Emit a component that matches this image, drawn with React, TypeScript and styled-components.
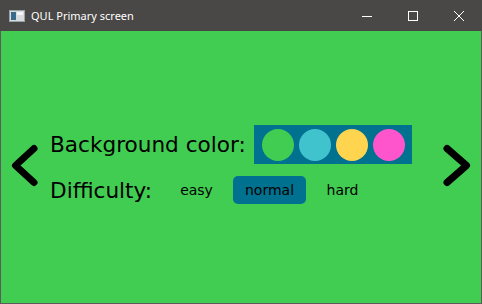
import { useState } from 'react'
import styled, { createGlobalStyle } from 'styled-components'

const GlobalStyle = createGlobalStyle`
  html, body {
    margin: 0;
    padding: 0;
    background: #3fcd52;
  }
`

const colors = ['#41cd52', '#41c3cd', '#ffd54f', '#ff55cc']
const levels = ['easy', 'normal', 'hard']

export default function App() {
  const [level, setLevel] = useState('normal')
  const [bg, setBg] = useState(colors[0])

  return (
    <Window>
      <GlobalStyle />
      <TitleBar>
        <AppIcon width="16" height="12" viewBox="0 0 16 12">
          <rect x="0.5" y="0.5" width="15" height="11" fill="#d8dcdf" stroke="#9aa3aa" />
          <rect x="2" y="2" width="5" height="8" fill="#3a6d8c" />
          <rect x="8" y="2" width="6" height="3" fill="#f3f5f6" />
        </AppIcon>
        <Title>QUL Primary screen</Title>
        <WinButtons>
          <WinButton>
            <svg width="10" height="10" viewBox="0 0 10 10">
              <line x1="0" y1="5.5" x2="10" y2="5.5" stroke="#fff" strokeWidth="1" />
            </svg>
          </WinButton>
          <WinButton>
            <svg width="10" height="10" viewBox="0 0 10 10">
              <rect x="0.5" y="0.5" width="9" height="9" fill="none" stroke="#fff" strokeWidth="1" />
            </svg>
          </WinButton>
          <WinButton>
            <svg width="10" height="10" viewBox="0 0 10 10">
              <path d="M0 0 L10 10 M10 0 L0 10" stroke="#fff" strokeWidth="1" />
            </svg>
          </WinButton>
        </WinButtons>
      </TitleBar>
      <Screen style={{ background: bg }}>
        <Arrow width="48" height="48" viewBox="0 0 48 48">
          <polyline points="33,5.5 14.5,22.5 33,39.5" fill="none" stroke="#000" strokeWidth="7" strokeLinecap="round" strokeLinejoin="round" />
        </Arrow>
        <Settings>
          <Row>
            <Label>Background color:</Label>
            <Palette>
              {colors.map((c) => (
                <Swatch key={c} $color={c} onClick={() => setBg(c)} />
              ))}
            </Palette>
          </Row>
          <Row>
            <Label>Difficulty:</Label>
            <Levels>
              {levels.map((l) => (
                <Level key={l} $active={l === level} onClick={() => setLevel(l)}>
                  {l}
                </Level>
              ))}
            </Levels>
          </Row>
        </Settings>
        <Arrow width="48" height="48" viewBox="0 0 48 48">
          <polyline points="14,5.5 33.5,22.5 14,39.5" fill="none" stroke="#000" strokeWidth="7" strokeLinecap="round" strokeLinejoin="round" />
        </Arrow>
      </Screen>
    </Window>
  )
}

const Window = styled.div`
  width: 482px;
  height: 304px;
  box-sizing: border-box;
  border: 1px solid #5c5c5c;
  border-top: none;
  display: flex;
  flex-direction: column;
  font-family: "DejaVu Sans", sans-serif;
`

const TitleBar = styled.div`
  height: 31px;
  margin: 0 -1px;
  background: #4a4846;
  display: flex;
  align-items: center;
  color: #fff;
  font-family: "Noto Sans", "Open Sans", sans-serif;
  font-size: 11px;
`

const AppIcon = styled.svg`
  margin-left: 9px;
  margin-right: 6px;
`

const Title = styled.span`
  flex: 1;
  padding-bottom: 1px;
`

const WinButtons = styled.div`
  display: flex;
  height: 100%;
`

const WinButton = styled.div`
  width: 46px;
  height: 100%;
  display: flex;
  align-items: center;
  justify-content: center;
`

const Screen = styled.div`
  flex: 1;
  display: flex;
  align-items: center;
`

const Arrow = styled.svg`
  flex: none;
  display: block;
`

const Settings = styled.div`
  flex: 1;
  display: flex;
  flex-direction: column;
  gap: 12px;
  padding-left: 1px;
  padding-bottom: 5px;
`

const Row = styled.div`
  display: flex;
  align-items: center;
  gap: 8px;
`

const Label = styled.span`
  font-size: 21.6px;
  color: #000;
  white-space: nowrap;
`

const Palette = styled.div`
  display: flex;
  gap: 5px;
  padding: 4px 7px 3px 8px;
  background: #00728f;
`

const Swatch = styled.div<{ $color: string }>`
  width: 32px;
  height: 32px;
  border-radius: 50%;
  background: ${(p) => p.$color};
  cursor: pointer;
`

const Levels = styled.div`
  display: flex;
`

const Level = styled.div<{ $active: boolean }>`
  width: 73px;
  height: 28px;
  display: flex;
  align-items: center;
  justify-content: center;
  border-radius: 5px;
  font-size: 14px;
  color: #000;
  background: ${(p) => (p.$active ? '#00728f' : 'transparent')};
  cursor: pointer;
`
